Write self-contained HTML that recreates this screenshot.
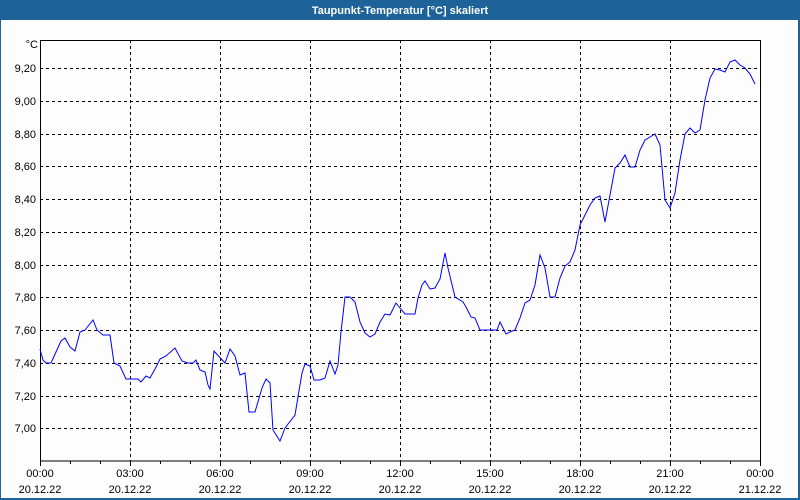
<!DOCTYPE html>
<html><head><style>
html,body{margin:0;padding:0;background:#fff}
svg{display:block}
text{font-family:"Liberation Sans",sans-serif;font-size:11px;fill:#000}
</style></head><body>
<svg width="800" height="500" viewBox="0 0 800 500">
<rect x="0" y="0" width="800" height="500" fill="#1d6399"/>
<rect x="1" y="20" width="797" height="478" fill="#fdfdfd"/>
<text x="400" y="14" text-anchor="middle" style="font-weight:bold;fill:#fff;font-size:11px">Taupunkt-Temperatur [°C] skaliert</text>
<g stroke="#000" stroke-width="1" stroke-dasharray="3,3" shape-rendering="crispEdges">
<line x1="40" y1="68.5" x2="760" y2="68.5"/>
<line x1="40" y1="101.5" x2="760" y2="101.5"/>
<line x1="40" y1="134.5" x2="760" y2="134.5"/>
<line x1="40" y1="166.5" x2="760" y2="166.5"/>
<line x1="40" y1="199.5" x2="760" y2="199.5"/>
<line x1="40" y1="232.5" x2="760" y2="232.5"/>
<line x1="40" y1="265.5" x2="760" y2="265.5"/>
<line x1="40" y1="297.5" x2="760" y2="297.5"/>
<line x1="40" y1="330.5" x2="760" y2="330.5"/>
<line x1="40" y1="363.5" x2="760" y2="363.5"/>
<line x1="40" y1="396.5" x2="760" y2="396.5"/>
<line x1="40" y1="428.5" x2="760" y2="428.5"/>
<line x1="130.5" y1="40" x2="130.5" y2="461"/>
<line x1="220.5" y1="40" x2="220.5" y2="461"/>
<line x1="310.5" y1="40" x2="310.5" y2="461"/>
<line x1="400.5" y1="40" x2="400.5" y2="461"/>
<line x1="490.5" y1="40" x2="490.5" y2="461"/>
<line x1="580.5" y1="40" x2="580.5" y2="461"/>
<line x1="670.5" y1="40" x2="670.5" y2="461"/>
</g>
<rect x="40.5" y="40.5" width="720" height="420.5" fill="none" stroke="#000" stroke-width="1" shape-rendering="crispEdges"/>
<g stroke="#000" shape-rendering="crispEdges">
<path d="M40.5 461v5M70.5 461v3M100.5 461v3M130.5 461v5M160.5 461v3M190.5 461v3M220.5 461v5M250.5 461v3M280.5 461v3M310.5 461v5M340.5 461v3M370.5 461v3M400.5 461v5M430.5 461v3M460.5 461v3M490.5 461v5M520.5 461v3M550.5 461v3M580.5 461v5M610.5 461v3M640.5 461v3M670.5 461v5M700.5 461v3M730.5 461v3M760.5 461v5"/>
</g>
<polyline fill="none" stroke="#0000ff" stroke-width="1" points="40,349 43,360 46,363 51,363 56,352 61,341 65,338 70,347 75,351 80,332 85,330 93,320 97,330 103,335 110,335 114,363 120,366 126,379 132,379 138,379 141,382 146,376 150,378 155,369 160,359 166,356 175,348 176,350 182,361 188,363 193,363 196,360 200,370 205,372 208,385 210,389 214,351 225,363 230,349 235,356 240,375 245,373 249,412 255,412 262,388 266,379 270,383 273,430 280,441 285,428 295,415 302,373 305,364 310,366 314,380 320,380 325,378 330,361 335,374 338,365 341,332 345,297 350,297 355,302 360,322 365,333 370,337 375,334 380,322 385,314 390,315 396,303 400,308 405,314 415,314 418,298 422,285 425,281 430,289 435,288 440,279 445,253 448,268 455,297 463,302 466,307 471,317 475,318 480,330 490,330 497,330 500,322 506,334 510,332 515,330 520,318 525,303 530,300 535,285 540,255 545,268 550,297 555,297 560,278 565,266 570,262 575,250 580,225 585,215 590,205 595,198 600,196 605,222 610,195 615,168 620,163 625,155 630,167 635,167 640,150 645,140 650,137 655,134 660,145 665,200 670,208 675,193 680,160 685,134 690,128 695,133 700,130 705,100 710,78 715,69 720,70 725,72 730,62 735,60 740,65 745,68 750,74 755,84"/>
<g text-anchor="end">
<text x="38" y="48">°C</text>
<text x="36" y="72">9,20</text>
<text x="36" y="105">9,00</text>
<text x="36" y="138">8,80</text>
<text x="36" y="170">8,60</text>
<text x="36" y="203">8,40</text>
<text x="36" y="236">8,20</text>
<text x="36" y="269">8,00</text>
<text x="36" y="301">7,80</text>
<text x="36" y="334">7,60</text>
<text x="36" y="367">7,40</text>
<text x="36" y="400">7,20</text>
<text x="36" y="432">7,00</text>
</g>
<g text-anchor="middle">
<text x="40" y="477">00:00</text><text x="40" y="493">20.12.22</text>
<text x="130" y="477">03:00</text><text x="130" y="493">20.12.22</text>
<text x="220" y="477">06:00</text><text x="220" y="493">20.12.22</text>
<text x="310" y="477">09:00</text><text x="310" y="493">20.12.22</text>
<text x="400" y="477">12:00</text><text x="400" y="493">20.12.22</text>
<text x="490" y="477">15:00</text><text x="490" y="493">20.12.22</text>
<text x="580" y="477">18:00</text><text x="580" y="493">20.12.22</text>
<text x="670" y="477">21:00</text><text x="670" y="493">20.12.22</text>
<text x="760" y="477">00:00</text><text x="760" y="493">21.12.22</text>
</g>
</svg>
</body></html>
